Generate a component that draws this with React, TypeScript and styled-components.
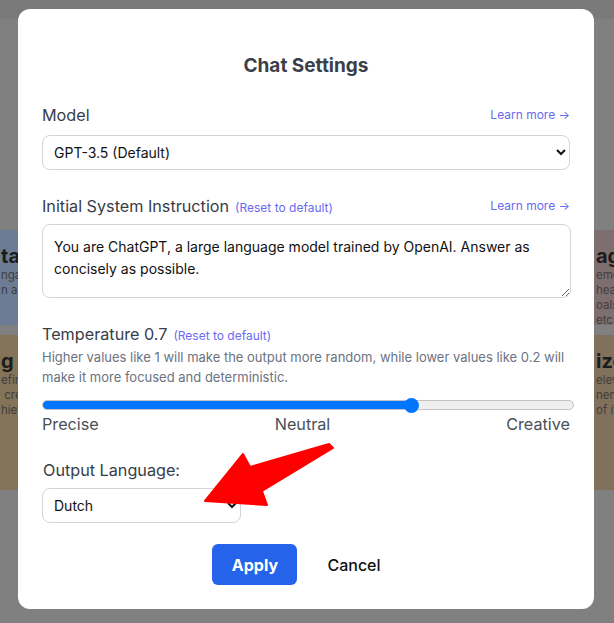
import React from "react";
import styled, { createGlobalStyle } from "styled-components";

const GlobalStyle = createGlobalStyle`
  html, body { margin: 0; padding: 0; }
  body { font-family: Inter, "Noto Sans", sans-serif; overflow: hidden; }
  * { box-sizing: border-box; }
`;

const Page = styled.div`
  position: relative;
  width: 614px;
  height: 623px;
  overflow: hidden;
  background: #808080;
  display: flex;
  flex-direction: column;
`;

const TopBar = styled.div`
  height: 19px;
  background: #7a7a7a;
  flex: none;
`;

const CardColumns = styled.div`
  margin: 211px 0 0 -15px;
  display: grid;
  grid-template-columns: 200px 379px 200px;
  column-gap: 8px;
  row-gap: 10px;
`;

const Card = styled.div<{ $bg: string; $h: number }>`
  background: ${(p) => p.$bg};
  height: ${(p) => p.$h}px;
  padding: 14px 16px;
  overflow: hidden;
`;

const CardTitle = styled.div`
  font-size: 20px;
  font-weight: 700;
  color: #1c1c1c;
  line-height: 24px;
  white-space: nowrap;
`;

const CardText = styled.div`
  font-size: 11.5px;
  line-height: 15px;
  color: #3e3e3e;
  white-space: nowrap;
`;

const Overlay = styled.div`
  position: absolute;
  inset: 0;
  display: flex;
  justify-content: flex-start;
  align-items: flex-start;
  padding: 9px 0 0 18px;
`;

const Modal = styled.div`
  width: 576px;
  height: 600px;
  background: #ffffff;
  border-radius: 12px;
  padding: 43px 24px 24px;
  display: flex;
  flex-direction: column;
`;

const Title = styled.h2`
  margin: 0;
  font-size: 19px;
  line-height: 28px;
  font-weight: 700;
  color: #3b3f4a;
  text-align: center;
`;

const Section = styled.div<{ $mt: number }>`
  margin-top: ${(p) => p.$mt}px;
  display: flex;
  flex-direction: column;
`;

const LabelRow = styled.div<{ $indent?: number }>`
  display: flex;
  align-items: baseline;
  justify-content: space-between;
  height: 24px;
  padding-left: ${(p) => p.$indent || 0}px;
`;

const LabelGroup = styled.div`
  display: flex;
  align-items: baseline;
  gap: 6px;
`;

const Label = styled.span`
  font-size: 16.2px;
  line-height: 24px;
  color: #383d48;
`;

const ResetLink = styled.span`
  font-size: 12px;
  color: #6a6af0;
`;

const LearnMore = styled.span`
  font-size: 12px;
  color: #6a6af0;
  position: relative;
  top: -2px;
`;

const Select = styled.select<{ $w?: number }>`
  margin-top: ${(p) => (p.$w ? 6 : 8)}px;
  width: ${(p) => (p.$w ? `${p.$w}px` : "100%")};
  height: 35px;
  border: 1px solid #d4d4d4;
  border-radius: 8px;
  background: #fff;
  padding: 0 6px 0 7px;
  font-family: Inter, "Noto Sans", sans-serif;
  font-size: 14px;
  color: #111;
`;

const TextArea = styled.textarea`
  margin-top: 6px;
  width: 529px;
  height: 74px;
  border: 1px solid #d4d4d4;
  border-radius: 8px;
  padding: 11px 11px;
  font-family: Inter, "Noto Sans", sans-serif;
  font-size: 14px;
  line-height: 22px;
  color: #111;
  resize: vertical;
`;

const Hint = styled.p`
  margin: 1px 0 0;
  font-size: 13px;
  line-height: 20px;
  color: #6b7280;
`;

const Range = styled.input`
  -webkit-appearance: none;
  appearance: none;
  margin: 13px 0 0;
  width: 532px;
  height: 10px;
  border-radius: 5px;
  border: 1px solid #c4c4c4;
  outline: none;
  &::-webkit-slider-thumb {
    -webkit-appearance: none;
    appearance: none;
    width: 15px;
    height: 15px;
    border-radius: 50%;
    background: #0075ff;
    border: none;
  }
`;

const ScaleRow = styled.div`
  display: flex;
  justify-content: space-between;
  margin-top: 2px;
`;

const ScaleLabel = styled.span`
  font-size: 16.2px;
  line-height: 24px;
  color: #4a4f59;
`;

const Buttons = styled.div`
  margin-top: 21px;
  display: flex;
  justify-content: center;
  gap: 9px;
  padding-left: 2px;
`;

const Button = styled.button<{ $primary?: boolean }>`
  height: 41px;
  width: ${(p) => (p.$primary ? "85px" : "auto")};
  padding: 0 ${(p) => (p.$primary ? 0 : 21)}px;
  border: none;
  border-radius: 6px;
  font-family: Inter, "Noto Sans", sans-serif;
  font-size: 16px;
  font-weight: ${(p) => (p.$primary ? 700 : 500)};
  background: ${(p) => (p.$primary ? "#2563eb" : "transparent")};
  color: ${(p) => (p.$primary ? "#ffffff" : "#111111")};
`;

const ArrowLayer = styled.svg`
  position: absolute;
  left: 0;
  top: 0;
  pointer-events: none;
`;

export default function App() {
  const value = 0.7;
  const pct = value * 100;
  return (
    <>
      <GlobalStyle />
      <Page>
        <TopBar />
        <CardColumns>
          <Card $bg="#6c7c94" $h={95}>
            <CardTitle>tasks</CardTitle>
            <CardText>ngaging</CardText>
            <CardText>n a</CardText>
          </Card>
          <Card $bg="#6c7c94" $h={95} />
          <Card $bg="#7e6e6f" $h={95}>
            <CardTitle>age</CardTitle>
            <CardText>ements</CardText>
            <CardText>health</CardText>
            <CardText>oals</CardText>
            <CardText>etc.</CardText>
          </Card>
          <Card $bg="#827359" $h={155}>
            <CardTitle>g Ideas</CardTitle>
            <CardText>efine</CardText>
            <CardText>&nbsp;create</CardText>
            <CardText>hieve</CardText>
          </Card>
          <Card $bg="#827359" $h={155} />
          <Card $bg="#80705c" $h={155}>
            <CardTitle>ize</CardTitle>
            <CardText>elevant</CardText>
            <CardText>nents</CardText>
            <CardText>of it</CardText>
          </Card>
        </CardColumns>

        <Overlay>
          <Modal>
            <Title>Chat Settings</Title>

            <Section $mt={23}>
              <LabelRow>
                <Label>Model</Label>
                <LearnMore>Learn more →</LearnMore>
              </LabelRow>
              <Select defaultValue="gpt35">
                <option value="gpt35">GPT-3.5 (Default)</option>
                <option value="gpt4">GPT-4</option>
              </Select>
            </Section>

            <Section $mt={24}>
              <LabelRow>
                <LabelGroup>
                  <Label>Initial System Instruction</Label>
                  <ResetLink>(Reset to default)</ResetLink>
                </LabelGroup>
                <LearnMore>Learn more →</LearnMore>
              </LabelRow>
              <TextArea defaultValue="You are ChatGPT, a large language model trained by OpenAI. Answer as concisely as possible." />
            </Section>

            <Section $mt={24}>
              <LabelRow>
                <LabelGroup>
                  <Label>Temperature 0.7</Label>
                  <ResetLink>(Reset to default)</ResetLink>
                </LabelGroup>
              </LabelRow>
              <Hint>
                Higher values like 1 will make the output more random, while lower values like 0.2 will
                make it more focused and deterministic.
              </Hint>
              <Range
                type="range"
                min={0}
                max={1}
                step={0.1}
                defaultValue={value}
                style={{
                  background: `linear-gradient(to right, #0075ff ${pct}%, #efefef ${pct}%)`,
                }}
              />
              <ScaleRow>
                <ScaleLabel>Precise</ScaleLabel>
                <ScaleLabel>Neutral</ScaleLabel>
                <ScaleLabel>Creative</ScaleLabel>
              </ScaleRow>
            </Section>

            <Section $mt={22}>
              <LabelRow $indent={1}>
                <Label>Output Language:</Label>
              </LabelRow>
              <Select $w={199} defaultValue="nl">
                <option value="en">English</option>
                <option value="nl">Dutch</option>
              </Select>
            </Section>

            <Buttons>
              <Button $primary>Apply</Button>
              <Button>Cancel</Button>
            </Buttons>
          </Modal>
        </Overlay>

        <ArrowLayer width="614" height="623" viewBox="0 0 614 623">
          <polygon
            points="205,501 243,454 250,467 329,444 333,448 262,491 267,505"
            fill="#ff0000"
            stroke="#ff0000"
            strokeWidth="2"
            strokeLinejoin="round"
          />
        </ArrowLayer>
      </Page>
    </>
  );
}
